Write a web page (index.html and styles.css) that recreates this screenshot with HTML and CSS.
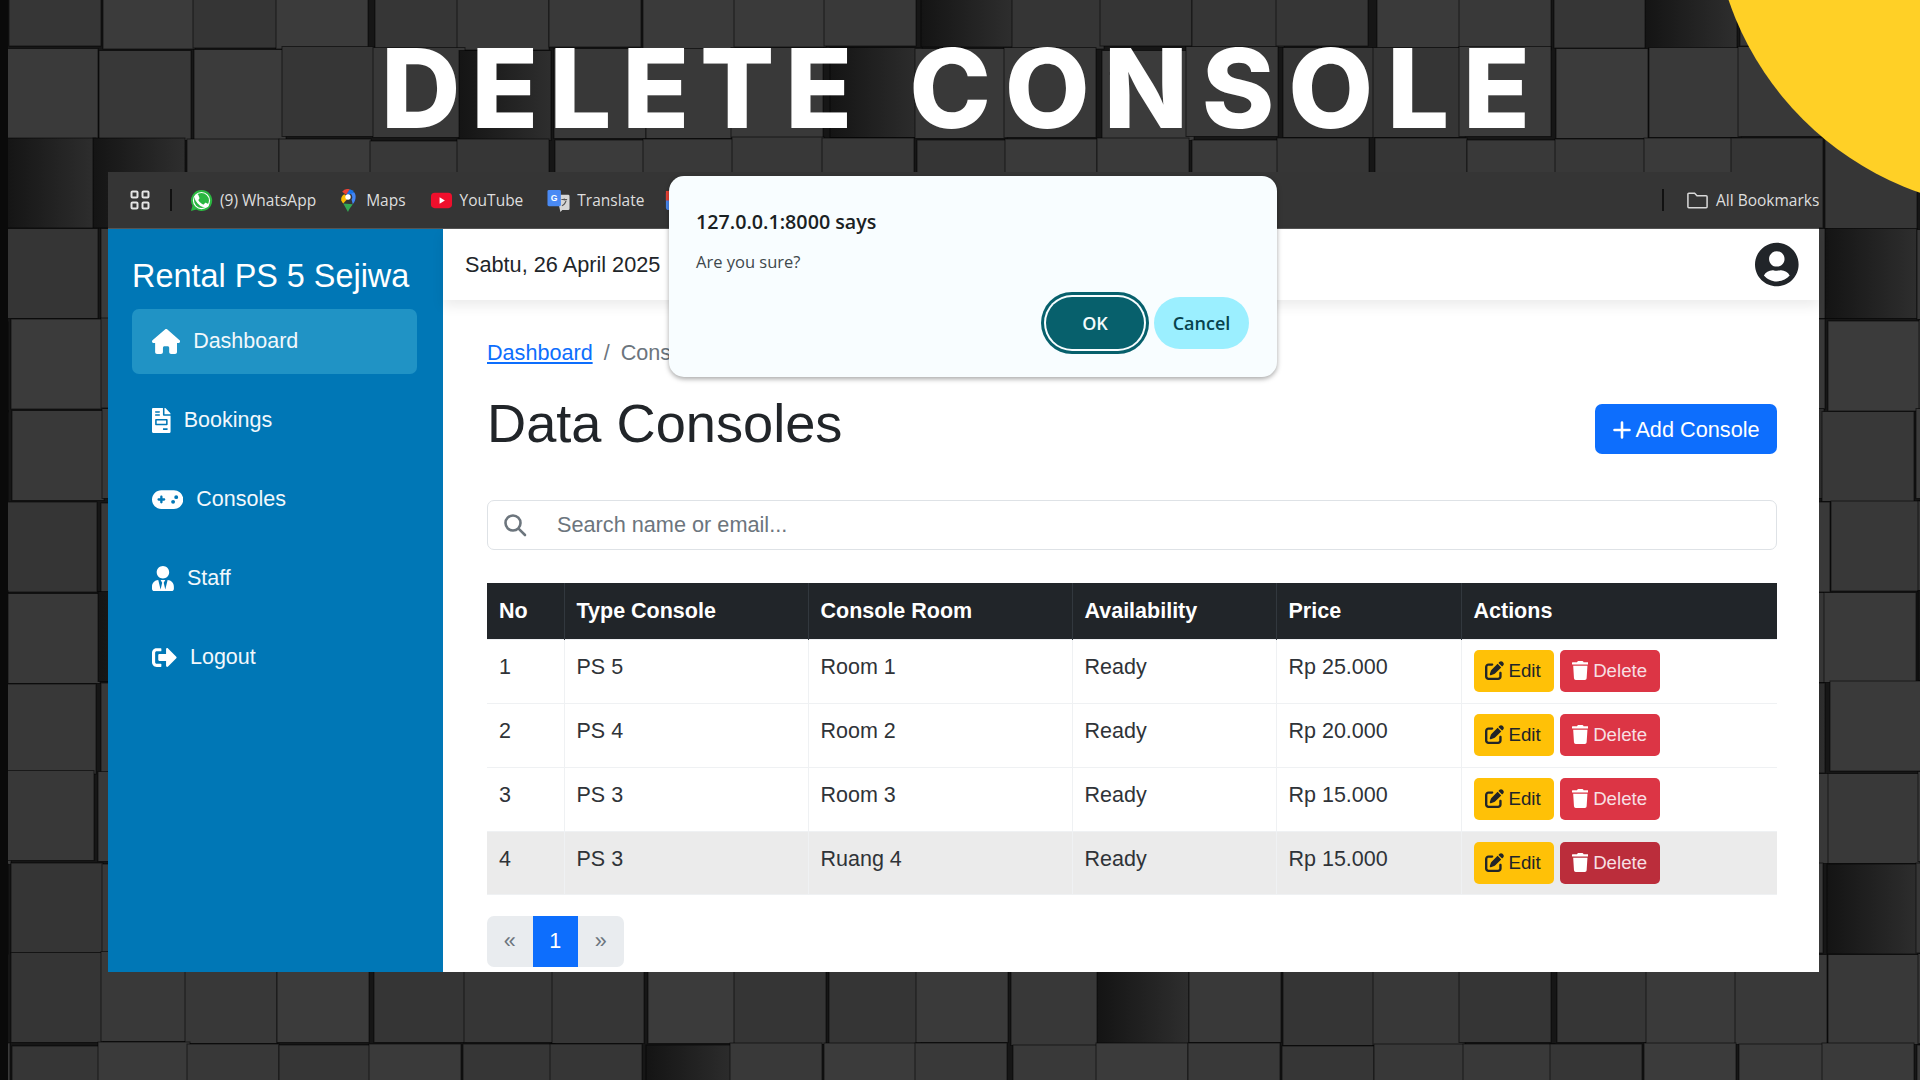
FILE: index.html
```html
<!DOCTYPE html>
<html lang="en">
<head>
    <meta charset="UTF-8">
    <meta name="viewport" content="width=device-width, initial-scale=1.0">
    <title>Delete Console</title>
    <link rel="stylesheet" href="styles.css">
</head>
<body>
    <svg class="icon-defs" aria-hidden="true">
        <symbol id="i-home" viewBox="0 0 576 512"><path d="M575.8 255.500c0 18-15 32.100-32 32.100h-32l.7 160.200c0 2.700-.2 5.400-.5 8.100V472c0 22.100-17.900 40-40 40H456c-1.100 0-2.200 0-3.300-.1c-1.400 .1-2.800 .1-4.200 .1H416 392c-22.100 0-40-17.900-40-40V448 384c0-17.700-14.300-32-32-32H256c-17.700 0-32 14.300-32 32v64 24c0 22.100-17.900 40-40 40H160 128.100c-1.500 0-3-.1-4.500-.2c-1.200 .1-2.400 .2-3.600 .2H104c-22.100 0-40-17.900-40-40V360c0-.9 0-1.900 .1-2.800V287.600H32c-18 0-32-14-32-32.100c0-9 3-17 10-24L266.400 8c7-7 15-8 22-8s15 2 21 7L564.800 231.500c8 7 12 15 11 24z"/></symbol>
        <symbol id="i-file" viewBox="0 0 384 512"><path d="M288 256H96v64h192v-64zm89-151L279.100 7c-4.500-4.500-10.600-7-17-7H256v128h128v-6.100c0-6.300-2.500-12.400-7-16.900zm-153 31V0H24C10.700 0 0 10.700 0 24v464c0 13.300 10.700 24 24 24h336c13.300 0 24-10.700 24-24V160H248c-13.200 0-24-10.800-24-24zM64 72c0-4.420 3.580-8 8-8h80c4.420 0 8 3.580 8 8v16c0 4.420-3.580 8-8 8H72c-4.420 0-8-3.580-8-8V72zm0 64c0-4.420 3.580-8 8-8h80c4.420 0 8 3.580 8 8v16c0 4.420-3.580 8-8 8H72c-4.420 0-8-3.580-8-8v-16zm256 304c0 4.420-3.580 8-8 8h-80c-4.420 0-8-3.580-8-8v-16c0-4.420 3.580-8 8-8h80c4.420 0 8 3.580 8 8v16zm0-200v96c0 8.840-7.160 16-16 16H80c-8.840 0-16-7.160-16-16v-96c0-8.840 7.160-16 16-16h224c8.840 0 16 7.160 16 16z"/></symbol>
        <symbol id="i-gamepad" viewBox="0 0 640 512"><path d="M192 64C86 64 0 150 0 256S86 448 192 448H448c106 0 192-86 192-192s-86-192-192-192H192zM496 168a40 40 0 1 1 0 80 40 40 0 1 1 0-80zM392 304a40 40 0 1 1 80 0 40 40 0 1 1 -80 0zM168 200c0-13.300 10.700-24 24-24s24 10.700 24 24v32h32c13.300 0 24 10.700 24 24s-10.700 24-24 24H216v32c0 13.300-10.700 24-24 24s-24-10.700-24-24V280H136c-13.300 0-24-10.700-24-24s10.700-24 24-24h32V200z"/></symbol>
        <symbol id="i-staff" viewBox="0 0 448 512"><path d="M224 256c70.700 0 128-57.300 128-128S294.700 0 224 0 96 57.300 96 128s57.300 128 128 128zm95.800 32.600L272 480l-32-136 32-56h-96l32 56-32 136-47.800-191.400C56.900 292 0 350.300 0 422.400V464c0 26.500 21.500 48 48 48h352c26.500 0 48-21.500 48-48v-41.600c0-72.100-56.900-130.400-128.200-133.800z"/></symbol>
        <symbol id="i-logout" viewBox="0 0 512 512"><path d="M497 273L329 441c-15 15-41 4.500-41-17v-96H152c-13.300 0-24-10.700-24-24v-96c0-13.300 10.700-24 24-24h136V88c0-21.400 25.900-32 41-17l168 168c9.300 9.400 9.300 24.600 0 34zM192 436v-40c0-6.600-5.400-12-12-12H96c-17.700 0-32-14.300-32-32V160c0-17.700 14.300-32 32-32h84c6.600 0 12-5.400 12-12V76c0-6.600-5.400-12-12-12H96c-53 0-96 43-96 96v192c0 53 43 96 96 96h84c6.600 0 12-5.400 12-12z"/></symbol>
        <symbol id="i-edit" viewBox="0 0 512 512"><path d="M471.600 21.700c-21.900-21.900-57.300-21.900-79.200 0L362.300 51.700l97.900 97.900 30.100-30.100c21.900-21.900 21.900-57.300 0-79.200L471.600 21.700zm-299.200 220c-6.100 6.100-10.800 13.600-13.500 21.900l-29.600 88.800c-2.900 8.600-.6 18.100 5.800 24.600s15.900 8.700 24.600 5.800l88.800-29.600c8.200-2.700 15.700-7.400 21.900-13.500L437.700 172.300 339.700 74.300 172.400 241.700zM96 64C43 64 0 107 0 160V416c0 53 43 96 96 96H352c53 0 96-43 96-96V320c0-17.700-14.300-32-32-32s-32 14.300-32 32v96c0 17.700-14.300 32-32 32H96c-17.700 0-32-14.300-32-32V160c0-17.700 14.300-32 32-32h96c17.700 0 32-14.300 32-32s-14.300-32-32-32H96z"/></symbol>
        <symbol id="i-trash" viewBox="0 0 448 512"><path d="M432 32H312l-9.400-18.700A24 24 0 0 0 281.100 0H166.800a23.720 23.720 0 0 0-21.400 13.300L136 32H16A16 16 0 0 0 0 48v32a16 16 0 0 0 16 16h416a16 16 0 0 0 16-16V48a16 16 0 0 0-16-16zM53.200 467a48 48 0 0 0 47.900 45h245.800a48 48 0 0 0 47.900-45L416 128H32z"/></symbol>
    </svg>

    <svg id="blocks" class="backdrop" width="1920" height="1080" viewBox="0 0 1920 1080" aria-hidden="true">
        <defs>
            <linearGradient id="deep">
                <stop offset="0" stop-color="#141414"/>
                <stop offset="1" stop-color="#2e2e2e"/>
            </linearGradient>
        </defs>
    </svg>
    <svg class="backdrop" width="1920" height="1080" viewBox="0 0 1920 1080" aria-hidden="true">
        <circle cx="2022" cy="-100" r="310" fill="#ffd026"/>
    </svg>

    <h1 class="headline"><span class="word-a">DELETE</span> <span class="word-b">CONSOLE</span></h1>

    <div class="window">
        <div class="bookmarks">
            <svg class="bm-apps" viewBox="0 0 20 20" fill="none" stroke="#e4e4e4" stroke-width="2"><rect x="1.500" y="1.500" width="6" height="6" rx="1"/><rect x="12.500" y="1.500" width="6" height="6" rx="1"/><rect x="1.500" y="12.500" width="6" height="6" rx="1"/><rect x="12.500" y="12.500" width="6" height="6" rx="1"/></svg>
            <span class="bm-divider"></span>
            <a class="bm-item">
                <svg class="bm-icon" viewBox="0 0 24 24"><path fill="#2bb741" d="M12 1a11 11 0 0 0-9.400 16.600L1 23l5.600-1.500A11 11 0 1 0 12 1z"/><circle cx="12" cy="12" r="8.400" fill="none" stroke="#fff" stroke-width="1.200"/><path fill="#fff" d="M8.800 6.800c-.4 0-1 .2-1.400.7-.5.5-1.200 1.300-1.200 3 0 1.800 1.300 3.500 1.500 3.700.2.300 2.600 4 6.300 5.500 3 1.200 3.700.9 4.300.9.700-.1 2.100-.9 2.400-1.700.3-.8.3-1.600.2-1.700-.1-.2-.3-.3-.7-.4l-2.500-1.200c-.3-.1-.6-.2-.8.2l-1.200 1.400c-.2.2-.4.3-.8.1-2.100-1-3.500-1.900-4.900-4.300-.4-.6.4-.6 1-2 .1-.2.100-.4 0-.6L9.900 7.400c-.3-.6-.6-.6-.8-.6z" transform="translate(-1.200 -1.200)"/></svg>
                (9) WhatsApp
            </a>
            <a class="bm-item bm-maps">
                <svg class="bm-icon bm-icon-pin" viewBox="0 0 16 24"><path fill="#34a853" d="M3 15l5 9c1-3 3-5 5-8z"/><path fill="#fbbc04" d="M1 12c.4 1.200 1.100 2.200 2 3.200L8.500 9 4 5.500C1.500 6.700.4 9.700 1 12z"/><path fill="#4285f4" d="M8 4c2.500 0 4.500 2 4.500 4.500 0 1-.3 1.800-.8 2.500L13 16c2-2.500 3-5 3-8 0-1.800-.6-3.400-1.600-4.700z"/><path fill="#1a73e8" d="M14.400 3.300A8 8 0 0 0 9.800.2L6 5l2 1.500z"/><path fill="#ea4335" d="M9.800.2A8 8 0 0 0 1.900 2.800L6 6z"/><circle cx="8" cy="8.300" r="2.800" fill="#fff"/></svg>
                Maps
            </a>
            <a class="bm-item">
                <svg class="bm-icon" viewBox="0 0 24 24"><rect x="1" y="4" width="22" height="16" rx="4" fill="#ef0f2c"/><path fill="#fff" d="M10 8.500l5.500 3.500-5.500 3.500z"/></svg>
                YouTube
            </a>
            <a class="bm-item bm-translate">
                <svg class="bm-icon" viewBox="0 0 24 24"><path fill="#d6d6d6" d="M10 6h12a1.500 1.500 0 0 1 1.500 1.500v13a1.500 1.500 0 0 1-1.500 1.500h-6l-2 2z"/><rect x="0.500" y="1" width="14" height="17" rx="1.500" fill="#4a8af4"/><text x="4" y="12" font-size="9" font-weight="700" fill="#fff" font-family="Liberation Sans, sans-serif">G</text><path d="M15 11h6M18 10v2M20 12c-1 3-3 5-4.500 5.500" fill="none" stroke="#555" stroke-width="1.100"/></svg>
                Translate
            </a>
            <svg class="bm-icon" viewBox="0 0 24 24"><rect x="2" y="2" width="20" height="20" rx="3" fill="#4a8af4"/><rect x="2" y="2" width="10" height="10" fill="#ea4335"/></svg>
            <div class="bm-right">
                <span class="bm-divider"></span>
                <a class="bm-item">
                    <svg class="bm-icon" viewBox="0 0 24 24" fill="none" stroke="#d8d8d8" stroke-width="1.600"><path d="M2 5.500a1 1 0 0 1 1-1h6l2.500 2.500h9.500a1 1 0 0 1 1 1v10.500a1 1 0 0 1-1 1H3a1 1 0 0 1-1-1z"/></svg>
                    All Bookmarks
                </a>
            </div>
        </div>

        <div class="app">
            <aside class="sidebar">
                <div class="brand">Rental PS 5 Sejiwa</div>
                <nav class="side-nav">
                    <a class="side-link active"><svg class="side-icon" viewBox="0 0 576 512"><use href="#i-home"/></svg>Dashboard</a>
                    <a class="side-link"><svg class="side-icon" viewBox="0 0 384 512"><use href="#i-file"/></svg>Bookings</a>
                    <a class="side-link"><svg class="side-icon" viewBox="0 0 640 512"><use href="#i-gamepad"/></svg>Consoles</a>
                    <a class="side-link"><svg class="side-icon" viewBox="0 0 448 512"><use href="#i-staff"/></svg>Staff</a>
                    <a class="side-link"><svg class="side-icon" viewBox="0 0 512 512"><use href="#i-logout"/></svg>Logout</a>
                </nav>
            </aside>

            <div class="page">
                <header class="topbar">
                    <span>Sabtu, 26 April 2025</span>
                    <svg class="avatar" viewBox="0 0 496 512"><path d="M248 8C111 8 0 119 0 256s111 248 248 248 248-111 248-248S385 8 248 8zm0 96c48.600 0 88 39.400 88 88s-39.400 88-88 88-88-39.400-88-88 39.400-88 88-88zm0 344c-58.700 0-111.300-26.600-146.500-68.200 18.800-35.400 55.600-59.800 98.500-59.800 2.400 0 4.800.4 7.100 1.100 13 4.200 26.600 6.900 40.900 6.900 14.300 0 28-2.700 40.900-6.900 2.300-.7 4.700-1.100 7.100-1.100 42.900 0 79.700 24.400 98.500 59.800C359.300 421.400 306.700 448 248 448z"/></svg>
                </header>

                <main class="content">
                    <div class="crumbs"><a href="#">Dashboard</a><span class="crumb-sep">/</span><span class="crumb-now">Consoles</span></div>

                    <div class="title-row">
                        <h2>Data Consoles</h2>
                        <a class="btn-add"><svg viewBox="0 0 20 20" fill="none" stroke="#fff" stroke-width="2.600" stroke-linecap="round"><path d="M10 2.500v15M2.500 10h15"/></svg>Add Console</a>
                    </div>

                    <div class="search">
                        <svg class="search-icon" viewBox="0 0 24 24" fill="none" stroke="#6c757d" stroke-width="2.600" stroke-linecap="round"><circle cx="10" cy="10" r="7.500"/><path d="M15.800 15.800L22 22"/></svg>
                        <span>Search name or email...</span>
                    </div>

                    <table class="consoles">
                        <colgroup>
                            <col class="c-no"><col class="c-type"><col class="c-room"><col class="c-avail"><col class="c-price"><col>
                        </colgroup>
                        <thead>
                            <tr><th>No</th><th>Type Console</th><th>Console Room</th><th>Availability</th><th>Price</th><th>Actions</th></tr>
                        </thead>
                        <tbody>
                            <tr>
                                <td>1</td><td>PS 5</td><td>Room 1</td><td>Ready</td><td>Rp 25.000</td>
                                <td class="actions">
                                    <a class="btn btn-edit"><svg viewBox="0 0 512 512"><use href="#i-edit"/></svg>Edit</a>
                                    <a class="btn btn-del"><svg viewBox="0 0 448 512"><use href="#i-trash"/></svg>Delete</a>
                                </td>
                            </tr>
                            <tr>
                                <td>2</td><td>PS 4</td><td>Room 2</td><td>Ready</td><td>Rp 20.000</td>
                                <td class="actions">
                                    <a class="btn btn-edit"><svg viewBox="0 0 512 512"><use href="#i-edit"/></svg>Edit</a>
                                    <a class="btn btn-del"><svg viewBox="0 0 448 512"><use href="#i-trash"/></svg>Delete</a>
                                </td>
                            </tr>
                            <tr>
                                <td>3</td><td>PS 3</td><td>Room 3</td><td>Ready</td><td>Rp 15.000</td>
                                <td class="actions">
                                    <a class="btn btn-edit"><svg viewBox="0 0 512 512"><use href="#i-edit"/></svg>Edit</a>
                                    <a class="btn btn-del"><svg viewBox="0 0 448 512"><use href="#i-trash"/></svg>Delete</a>
                                </td>
                            </tr>
                            <tr class="hovered">
                                <td>4</td><td>PS 3</td><td>Ruang 4</td><td>Ready</td><td>Rp 15.000</td>
                                <td class="actions">
                                    <a class="btn btn-edit"><svg viewBox="0 0 512 512"><use href="#i-edit"/></svg>Edit</a>
                                    <a class="btn btn-del"><svg viewBox="0 0 448 512"><use href="#i-trash"/></svg>Delete</a>
                                </td>
                            </tr>
                        </tbody>
                    </table>

                    <div class="pager">
                        <a>«</a><a class="current">1</a><a>»</a>
                    </div>
                </main>
            </div>
        </div>

        <div class="dialog">
            <div class="dialog-title">127.0.0.1:8000 says</div>
            <div class="dialog-msg">Are you sure?</div>
            <div class="dialog-actions">
                <button class="dlg-ok">OK</button>
                <button class="dlg-cancel">Cancel</button>
            </div>
        </div>
    </div>

    <script src="blocks.js"></script>
</body>
</html>
```

FILE: styles.css
```css
* {
    box-sizing: border-box;
}

body {
    margin: 0;
    width: 1920px;
    height: 1080px;
    position: relative;
    overflow: hidden;
    background-color: #161616;
    font-family: "Liberation Sans", Arial, sans-serif;
    color: #212529;
}

.icon-defs {
    position: absolute;
    width: 0;
    height: 0;
}

.backdrop {
    position: absolute;
    left: 0;
    top: 0;
}

.headline {
    position: absolute;
    left: 381px;
    top: 25px;
    margin: 0;
    font-family: Inter, "Liberation Sans", sans-serif;
    font-size: 110px;
    line-height: 126px;
    font-weight: 800;
    word-spacing: 22px;
    white-space: nowrap;
    color: #fff;
}

.word-a {
    letter-spacing: 10.8px;
}

.word-b {
    letter-spacing: 13.8px;
}

/* browser window */
.window {
    position: absolute;
    left: 108px;
    top: 172px;
    width: 1711px;
    height: 800px;
    display: flex;
    flex-direction: column;
}

.bookmarks {
    height: 57px;
    flex: none;
    display: flex;
    align-items: center;
    padding-left: 22px;
    background-color: #353535;
    border-bottom: 1px solid #555;
    overflow: hidden;
    font-family: "Open Sans", sans-serif;
    font-size: 15.5px;
    color: #dedede;
}

.bm-apps {
    width: 20px;
    height: 20px;
    flex: none;
}

.bm-divider {
    width: 2px;
    height: 22px;
    flex: none;
    margin: 0 18px 0 20px;
    background-color: #111;
}

.bm-item {
    display: flex;
    align-items: center;
    gap: 7px;
    margin-right: 24px;
    white-space: nowrap;
    flex: none;
}

.bm-maps {
    gap: 10px;
}

.bm-translate {
    margin-right: 20px;
}

.bm-icon {
    width: 23px;
    height: 23px;
    flex: none;
}

.bm-icon-pin {
    width: 16px;
}

.bm-right {
    margin-left: auto;
    display: flex;
    align-items: center;
    width: 157px;
    flex: none;
}

.bm-right .bm-divider {
    margin: 0 22px 0 0;
}

.bm-right .bm-item {
    margin-right: 0;
}

.app {
    flex: 1;
    min-height: 0;
    display: flex;
}

/* sidebar */
.sidebar {
    width: 335px;
    flex: none;
    padding: 28px 0 0 24px;
    background-color: #0077b6;
    color: #fff;
}

.brand {
    font-size: 32.4px;
    line-height: 38px;
    white-space: nowrap;
}

.side-nav {
    margin-top: 14px;
    width: 285px;
    display: flex;
    flex-direction: column;
    gap: 14px;
}

.side-link {
    height: 65px;
    display: flex;
    align-items: center;
    gap: 13px;
    padding-left: 20px;
    border-radius: 7px;
    font-size: 21.5px;
    color: #f2f8fc;
}

.side-link.active {
    background-color: #2093c5;
}

.side-icon {
    height: 25px;
    fill: #fff;
    flex: none;
}

/* main page */
.page {
    flex: 1;
    min-width: 0;
    display: flex;
    flex-direction: column;
    background-color: #fff;
}

.topbar {
    height: 71px;
    flex: none;
    display: flex;
    align-items: center;
    justify-content: space-between;
    padding: 0 20px 0 22px;
    background-color: #fff;
    box-shadow: 0 6px 12px rgba(0, 0, 0, 0.08);
    font-size: 21.7px;
}

.avatar {
    height: 45px;
    fill: #212529;
}

.content {
    flex: 1;
    min-height: 0;
    padding: 37px 42px 0 44px;
}

.crumbs {
    display: flex;
    font-size: 21.6px;
    line-height: 32px;
    color: #6c757d;
}

.crumbs a {
    color: #0d6efd;
}

.crumb-sep {
    margin: 0 11px;
}

.title-row {
    margin-top: 22px;
    display: flex;
    justify-content: space-between;
    align-items: flex-start;
}

.title-row h2 {
    margin: 0;
    font-size: 54.2px;
    line-height: 64px;
    font-weight: 400;
}

.btn-add {
    margin-top: 13px;
    width: 182px;
    height: 50px;
    padding-top: 1px;
    display: flex;
    align-items: center;
    justify-content: center;
    gap: 3px;
    border-radius: 7px;
    background-color: #0d6efd;
    color: #fff;
    font-size: 21.7px;
}

.btn-add svg {
    width: 20px;
    height: 20px;
}

.search {
    margin-top: 45px;
    height: 50px;
    display: flex;
    align-items: center;
    gap: 30px;
    padding-left: 15px;
    border: 1px solid #dee2e6;
    border-radius: 7px;
    font-size: 21.7px;
    color: #6c757d;
}

.search-icon {
    width: 24px;
    height: 24px;
    flex: none;
}

.consoles {
    margin-top: 33px;
    width: 100%;
    border-collapse: collapse;
    table-layout: fixed;
    font-size: 21.5px;
}

.c-no { width: 77px; }
.c-type { width: 244px; }
.c-room { width: 264px; }
.c-avail { width: 204px; }
.c-price { width: 185px; }

.consoles th {
    height: 56px;
    padding: 2px 12px 0;
    text-align: left;
    font-weight: 700;
    background-color: #212529;
    color: #fff;
    border-left: 1px solid #32383e;
}

.consoles td {
    height: 64px;
    padding: 11px 12px 0;
    vertical-align: top;
    line-height: 32px;
    border: 1px solid #eff1f3;
    color: #2f3338;
}

.consoles th:first-child,
.consoles td:first-child {
    border-left: none;
}

.consoles td:last-child {
    border-right: none;
}

.consoles tr.hovered td {
    height: 63px;
    background-color: #ebebeb;
}

.consoles td.actions {
    padding: 10px 10px 0 12px;
    white-space: nowrap;
}

.actions {
    font-size: 0;
}

.btn {
    display: inline-flex;
    align-items: center;
    gap: 5px;
    height: 42px;
    border-radius: 5px;
    font-size: 18.7px;
    vertical-align: top;
}

.btn svg {
    height: 19px;
}

.btn-edit {
    width: 80px;
    padding-left: 11px;
    margin-right: 6px;
    background-color: #ffc107;
    color: #212529;
}

.btn-edit svg {
    fill: #212529;
}

.btn-del {
    width: 100px;
    padding-left: 12px;
    background-color: #dc3545;
    color: #f7dfe2;
}

.btn-del svg {
    fill: #fff;
}

.hovered .btn-del {
    background-color: #bb2d3b;
}

.pager {
    margin-top: 21px;
    display: inline-flex;
    height: 51px;
    border-radius: 7px;
    overflow: hidden;
    background-color: #e9ecef;
    font-size: 21.5px;
    color: #6c757d;
}

.pager a {
    width: 45.5px;
    display: flex;
    align-items: center;
    justify-content: center;
}

.pager .current {
    background-color: #0d6efd;
    color: #fff;
}

/* the browser's confirm box */
.dialog {
    position: absolute;
    left: 561px;
    top: 4px;
    width: 608px;
    height: 201px;
    padding: 32px 27px 0;
    border-radius: 15px;
    background-color: #f8fdff;
    box-shadow: 0 2px 5px rgba(0, 0, 0, 0.35);
    font-family: "Open Sans", sans-serif;
}

.dialog-title {
    font-size: 19.7px;
    line-height: 28px;
    font-weight: 600;
    color: #1a2123;
}

.dialog-msg {
    margin-top: 14px;
    font-size: 16.5px;
    line-height: 24px;
    color: #3e484c;
}

.dialog-actions {
    margin-top: 23px;
    display: flex;
    justify-content: flex-end;
    gap: 10px;
    padding-right: 1px;
}

.dialog-actions button {
    height: 52px;
    border: none;
    border-radius: 26px;
    font-family: inherit;
    font-size: 18px;
    font-weight: 600;
}

.dlg-ok {
    width: 98px;
    background-color: #07606c;
    color: #f3fbfd;
    box-shadow: 0 0 0 2px #f8fdff, 0 0 0 5px #07606c;
}

.dlg-cancel {
    width: 95px;
    background-color: #9befff;
    color: #07434d;
}
```

FILE: blocks.js
```js
// Backdrop: a wall of square blocks, each nudged a little out of line.
const wall = document.getElementById('blocks');
const NS = 'http://www.w3.org/2000/svg';
const shades = ['#3a3a3a', '#383838', '#363636', '#3b3b3b', '#353535', '#393939'];

const noise = (i, j, k) => {
    const v = Math.sin(i * 12.9898 + j * 78.233 + k * 37.719) * 43758.5453;
    return v - Math.floor(v);
};

const addRect = (x, y, w, h, fill, stroke) => {
    const r = document.createElementNS(NS, 'rect');
    r.setAttribute('x', x);
    r.setAttribute('y', y);
    r.setAttribute('width', w);
    r.setAttribute('height', h);
    r.setAttribute('fill', fill);
    if (stroke) {
        r.setAttribute('stroke', stroke);
    }
    wall.appendChild(r);
};

for (let j = 0; j < 13; j++) {
    for (let i = 0; i < 23; i++) {
        const x = i * 91 - 84 + Math.round((noise(i, j, 1) - 0.5) * 10);
        const y = j * 90.5 - 42 + Math.round((noise(i, j, 2) - 0.5) * 4);
        const deep = noise(i, j, 3) < 0.08;
        const fill = deep ? 'url(#deep)' : shades[Math.floor(noise(i, j, 4) * shades.length)];
        addRect(x, y, 92, 90, fill, 'rgba(0,0,0,0.55)');
    }
}

// Dark strip along the left edge of the picture
addRect(0, 0, 8, 1080, '#0a0a0a');
```
